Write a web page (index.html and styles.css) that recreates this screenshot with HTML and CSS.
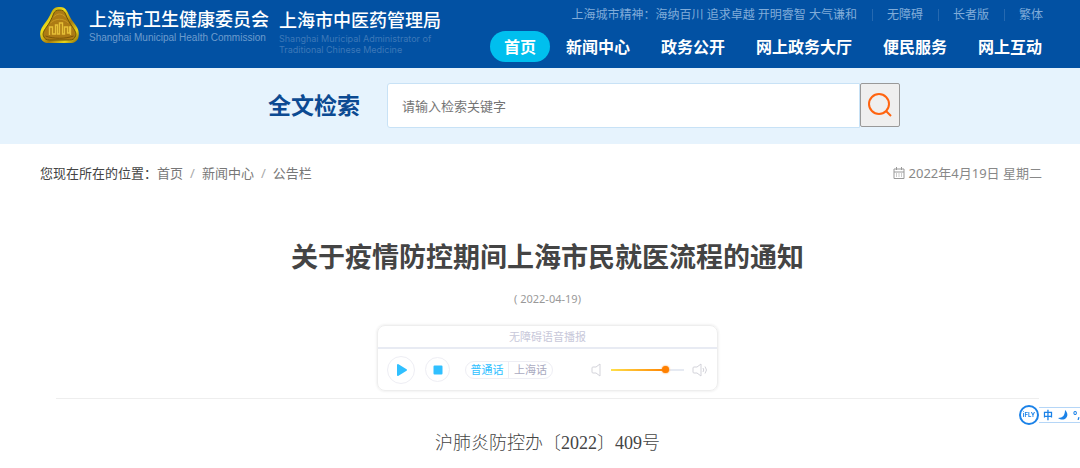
FILE: index.html
```
<!DOCTYPE html>
<html lang="zh-CN">
<head>
  <meta charset="UTF-8" />
  <meta name="viewport" content="width=device-width, initial-scale=1" />
  <title>关于疫情防控期间上海市民就医流程的通知</title>
  <link rel="stylesheet" href="styles.css">
</head>
<body>
  <header class="header">
    <div class="brand">
      <svg class="emblem" viewBox="0 0 40 38" aria-hidden="true">
        <defs>
          <linearGradient id="gold" x1="0" y1="0" x2="1" y2="1">
            <stop offset="0" stop-color="#8a7500" />
            <stop offset="0.35" stop-color="#f2df1c" />
            <stop offset="0.6" stop-color="#a87c0c" />
            <stop offset="0.8" stop-color="#e8d51a" />
            <stop offset="1" stop-color="#7d5a08" />
          </linearGradient>
        </defs>
        <path d="M20 1c4 0 6 1 8 5 2 5 5 9 8 13 3 4 4 8 3 12-1 4-4 6-8 6H9c-4 0-7-2-8-6-1-4 0-8 3-12 3-4 6-8 8-13 2-4 4-5 8-5z" fill="url(#gold)" />
        <path d="M20 4c3 0 5 1 6 4 2 5 4 9 7 13 3 4 4 7 3 9-1 3-3 4-6 4H10c-3 0-5-1-6-4-1-2 0-5 3-9 3-4 5-8 7-13 1-3 3-4 6-4z" fill="#ad7b14" stroke="#6f5405" />
        <path d="M14 11c4-4 8-4 12 0M11 17c5-5 13-5 18 0" fill="none" stroke="#c99a22" />
        <path d="M10 29v-8h3v7h3V19h2v9h2V17h3v11h2v-7h3v6h2v-6h1v8" fill="none" stroke="#e6c037" stroke-width="1.4" />
        <path d="M6 30c8 3 20 3 28 0" fill="none" stroke="#7d5608" />
      </svg>
      <div class="org">
        <div class="org-name">上海市卫生健康委员会</div>
        <div class="org-en">Shanghai Municipal Health Commission</div>
      </div>
      <div class="org org-second">
        <div class="org-name">上海市中医药管理局</div>
        <div class="org-en">Shanghai Muricipal Administrator of<br>Traditional Chinese Medicine</div>
      </div>
    </div>
    <div class="header-right">
      <div class="top-links">
        <span>上海城市精神：海纳百川 追求卓越 开明睿智 大气谦和</span>
        <a href="#">无障碍</a>
        <a href="#">长者版</a>
        <a href="#">繁体</a>
      </div>
      <nav class="nav">
        <a class="active" href="#">首页</a>
        <a href="#">新闻中心</a>
        <a href="#">政务公开</a>
        <a href="#">网上政务大厅</a>
        <a href="#">便民服务</a>
        <a href="#">网上互动</a>
      </nav>
    </div>
  </header>

  <form class="search" onsubmit="return false">
    <label for="keyword">全文检索</label>
    <input type="text" id="keyword" placeholder="请输入检索关键字" />
    <button type="submit" aria-label="检索">
      <svg viewBox="0 0 26 26" width="26" height="26">
        <circle cx="12" cy="12" r="10" />
        <path d="M19 19l5 5" />
      </svg>
    </button>
  </form>

  <div class="location">
    <div class="crumbs">
      <span class="crumbs-label">您现在所在的位置：</span>
      <a href="#">首页</a><i>/</i><a href="#">新闻中心</a><i>/</i><a href="#">公告栏</a>
    </div>
    <div class="today">
      <svg viewBox="0 0 12 12" width="12" height="12" aria-hidden="true">
        <path d="M1 2h10v9.500H1zM1 5h10M3.500 0v3M8.500 0v3" />
        <path d="M3 7h1M5.500 7h1M8 7h1M3 9h1M5.500 9h1M8 9h1" />
      </svg>
      <span>2022年4月19日 星期二</span>
    </div>
  </div>

  <main class="article">
    <h1>关于疫情防控期间上海市民就医流程的通知</h1>
    <p class="date">( 2022-04-19)</p>

    <section class="player">
      <div class="player-title">无障碍语音播报</div>
      <div class="controls">
        <button class="round play" type="button" aria-label="播放">
          <svg viewBox="0 0 12 14" width="12" height="14"><path d="M2 2l8 5-8 5z" /></svg>
        </button>
        <button class="round stop" type="button" aria-label="停止">
          <svg viewBox="0 0 10 10" width="10" height="10"><path d="M1.500 1.500h7v7h-7z" /></svg>
        </button>
        <div class="dialect">
          <button class="on" type="button">普通话</button>
          <button type="button">上海话</button>
        </div>
        <svg class="speaker" viewBox="0 0 16 16" width="16" height="16" aria-hidden="true">
          <path d="M12 2v12l-4-3H5q-1 0-1-1V6q0-1 1-1h3z" />
        </svg>
        <input class="volume" type="range" min="0" max="100" value="78" aria-label="音量" />
        <svg class="speaker" viewBox="0 0 16 16" width="16" height="16" aria-hidden="true">
          <path d="M9 2v12l-4-3H2q-1 0-1-1V6q0-1 1-1h3zM11 6q1.500 2 0 4M13 4.500q3 3.500 0 7" />
        </svg>
      </div>
    </section>

    <p class="doc-number">沪肺炎防控办〔2022〕409号</p>
  </main>

  <!-- input method bar -->
  <div class="ime">
    <svg viewBox="0 0 20 20" width="20" height="20" aria-hidden="true">
      <circle cx="10" cy="10" r="9" />
      <text x="10" y="12" text-anchor="middle">iFLY</text>
    </svg>
    <div class="ime-bar">
      <span>中</span>
      <svg viewBox="0 0 10 10" width="10" height="10" aria-hidden="true"><path d="M7 0c3 3 3 6 1 8s-5 2-8 0c5 0 7-3 7-8z" /></svg>
      <span>°,</span>
    </div>
  </div>
</body>
</html>
```

FILE: styles.css
```
* {
  box-sizing: border-box;
}
body {
  margin: 0;
  font-family: "Noto Sans", "Noto Sans CJK SC", sans-serif;
  font-size: 13px;
  color: #444;
  background-color: #fff;
  overflow: hidden;
}
a {
  color: inherit;
  text-decoration: none;
}
.header {
  display: flex;
  justify-content: space-between;
  height: 68px;
  padding: 0 23px 0 39px;
  background-color: #0251a3;
  color: #fff;
  white-space: nowrap;
}
.brand {
  display: flex;
  align-items: flex-start;
  padding-top: 6px;
}
.emblem {
  width: 41px;
  height: 38px;
  margin-right: 9px;
}
.org-name {
  font-size: 18px;
  line-height: 26px;
  font-weight: 500;
}
.org-en {
  font-family: "Liberation Sans", Arial, sans-serif;
  font-size: 10px;
  line-height: 12px;
  color: #6d9ccd;
}
.org-second {
  margin-left: 10px;
  padding-top: 1px;
}
.org-second .org-en {
  font-family: Inter, sans-serif;
  font-size: 9px;
  line-height: 11px;
  color: #3d78b8;
}
.top-links {
  display: flex;
  justify-content: flex-end;
  padding-right: 14px;
  font-size: 12px;
  line-height: 30px;
  color: #80acd9;
}
.top-links a {
  display: flex;
  align-items: center;
}
.top-links a::before {
  content: "";
  width: 1px;
  height: 12px;
  margin: 0 14px 0 15px;
  background-color: #2669b0;
}
.nav {
  display: flex;
  justify-content: flex-end;
  gap: 1px;
  margin-top: 1px;
  font-size: 16px;
  font-weight: bold;
  line-height: 30px;
}
.nav a {
  padding: 1px 15px 0;
}
.nav .active {
  padding: 1px 14px 0;
  border-radius: 16px;
  background-color: #00bfee;
}

.search {
  display: flex;
  justify-content: center;
  align-items: flex-start;
  height: 76px;
  padding: 15px 0 0 88px;
  background-color: #e6f3fd;
}
.search label {
  margin-right: 27px;
  font-size: 23px;
  font-weight: bold;
  line-height: 44px;
  color: #0c4a92;
}
.search input {
  width: 473px;
  height: 45px;
  padding: 0 14px;
  border: 1px solid #c8e2f6;
  border-radius: 3px 0 0 3px;
  background-color: #fff;
  font-family: inherit;
  font-size: 13px;
}
.search input::placeholder {
  color: #757575;
}
.search button {
  display: flex;
  justify-content: center;
  align-items: center;
  width: 40px;
  height: 44px;
  padding: 0;
  border: 1px solid #999;
  border-radius: 2px;
  background-color: #efefef;
}
.search svg {
  fill: none;
  stroke: #ff6410;
  stroke-width: 2;
}

.location {
  display: flex;
  justify-content: space-between;
  padding: 18px 38px 0 40px;
  line-height: 22px;
  color: #777;
}
.crumbs {
  display: flex;
}
.crumbs-label {
  color: #444;
}
.crumbs i {
  margin: 0 7px;
  font-style: normal;
  color: #aaa;
}
.today {
  display: flex;
  align-items: center;
  gap: 4px;
  color: #888;
}
.today svg {
  fill: none;
  stroke: #999;
}

.article {
  margin: 0 41px 0 56px;
  text-align: center;
}
h1 {
  margin: 53px 0 0;
  font-size: 27px;
  line-height: 40px;
  color: #444;
}
.date {
  margin: 14px 0 0;
  font-size: 11px;
  line-height: 16px;
  color: #999;
}
.player {
  width: 341px;
  margin: 18px auto 7px;
  border: 1px solid #eee;
  border-radius: 8px;
  box-shadow: 0 0 3px #e4e4e4;
}
.player-title {
  border-bottom: 2px solid #e8ebf3;
  font-size: 11px;
  line-height: 21px;
  color: #c8c8da;
}
.controls {
  display: flex;
  align-items: center;
  height: 41px;
  padding: 0 9px;
}
.controls button {
  padding: 0;
  background: none;
  font-family: inherit;
}
.round {
  display: flex;
  justify-content: center;
  align-items: center;
  border: 1px solid #eeeef4;
  border-radius: 50%;
}
.round svg {
  fill: #30c0ff;
  stroke: #30c0ff;
  stroke-width: 2;
  stroke-linejoin: round;
}
.play {
  width: 28px;
  height: 28px;
  margin-right: 10px;
}
.play svg {
  margin-left: 2px;
}
.stop {
  width: 25px;
  height: 25px;
}
.dialect {
  display: flex;
  margin: 0 auto 0 15px;
  border: 1px solid #eeeef4;
  border-radius: 9px;
}
.dialect button {
  width: 43px;
  border: 0;
  font-size: 11px;
  line-height: 16px;
  color: #aaaabf;
}
.dialect .on {
  border-right: 1px solid #eeeef4;
  color: #30c0ff;
}
.speaker {
  fill: none;
  stroke: #d3d3da;
}
.volume {
  appearance: none;
  width: 73px;
  height: 10px;
  margin: 0 8px 0 7px;
  background: linear-gradient(to right, #ffe04a, #ff8000 78%, #e6eaf2 78%) center / 100% 2px no-repeat;
}
.volume::-webkit-slider-thumb {
  appearance: none;
  width: 7px;
  height: 7px;
  border-radius: 50%;
  background-color: #ff8000;
  box-shadow: 0 0 2px #ff8000;
}
.doc-number {
  margin: 0;
  padding-top: 31px;
  border-top: 1px solid #eee;
  font-family: "Liberation Serif", "Noto Sans CJK SC", serif;
  font-size: 18px;
  font-weight: 300;
  line-height: 26px;
}

.ime {
  position: fixed;
  top: 405px;
  right: 0;
  display: flex;
  align-items: center;
  color: #1b82e8;
}
.ime svg circle {
  fill: #fff;
  stroke: #1b82e8;
  stroke-width: 2;
}
.ime svg text {
  font-family: Inter, sans-serif;
  font-size: 6px;
  font-weight: bold;
  fill: #1b82e8;
}
.ime-bar {
  display: flex;
  align-items: center;
  gap: 5px;
  padding-left: 4px;
  border: solid #b5d6f7;
  border-width: 1px 0;
  font-size: 10px;
  font-weight: bold;
  line-height: 14px;
}
.ime-bar svg {
  fill: #1b82e8;
}
```
